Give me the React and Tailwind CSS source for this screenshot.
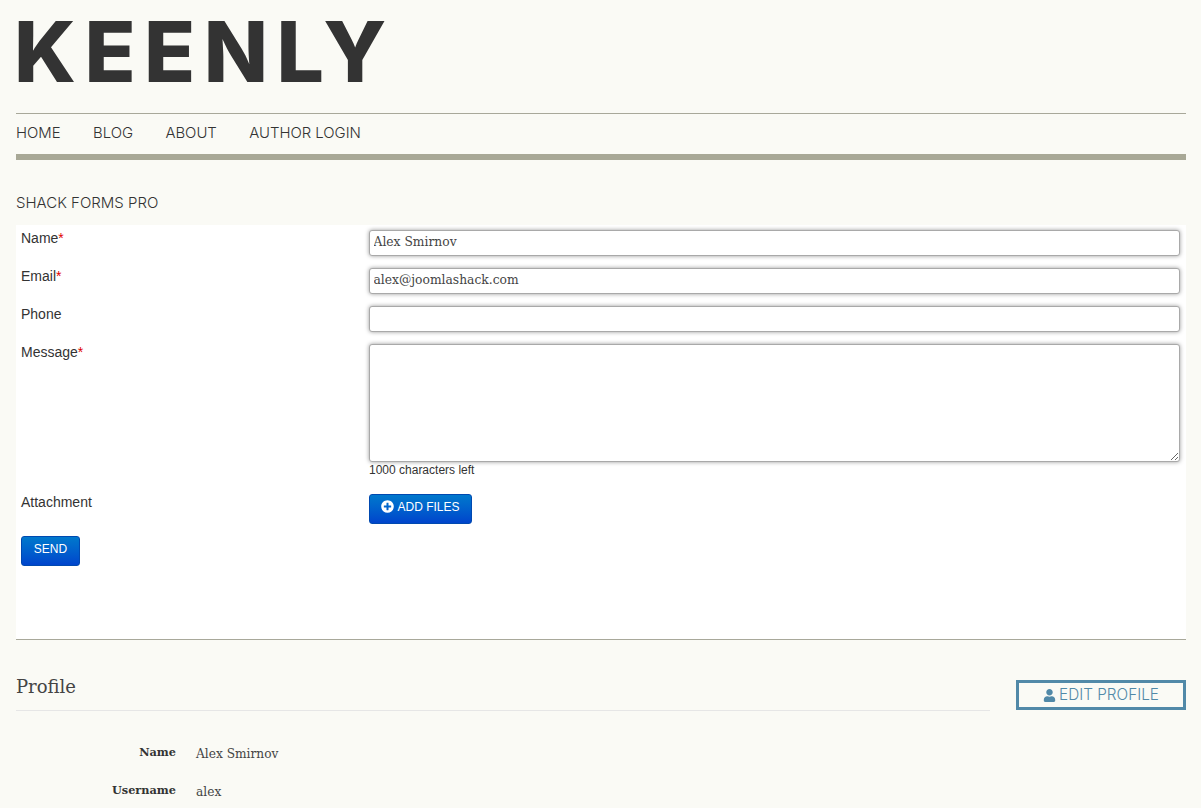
import React from "react";
import { FaUser, FaPlusCircle } from "react-icons/fa";

const mont = "font-['Inter','Lato',sans-serif]";
const slab = "font-['DejaVu_Serif','Liberation_Serif',serif]";
const label = "font-['Liberation_Sans',Arial,sans-serif] text-[14px] leading-[20px] text-[#333] pt-[3px]";
const field = "block w-full rounded-[3px] border border-[#a9a9a9] bg-white px-[3.5px] text-[12.3px] text-[#444] shadow-[0_0_4px_rgba(0,0,0,0.4)] outline-none " + slab;
const btn = "flex items-center justify-center rounded-[3px] border border-[#0049b0] bg-gradient-to-b from-[#0078cc] to-[#0044cc] pb-[5px] font-['Liberation_Sans',Arial,sans-serif] text-[12px] text-white";

function Req() {
  return <span className="text-[#e00000]">*</span>;
}

function Row({ name, req, value }) {
  return (
    <div className="grid h-[38px] grid-cols-[348px_811px]">
      <div className={label}>{name}{req && <Req />}</div>
      <input readOnly value={value} className={field + " mt-[5px] h-[26px] pb-[3px]"} />
    </div>
  );
}

export default function App() {
  return (
    <div className="h-[808px] min-h-[808px] overflow-hidden bg-[#fafaf5] pl-4 pr-[15px]">
      <header className="h-[114px] border-b border-[#a8a89a]">
        <div className={"-ml-[2px] pt-[5px] text-[84px] font-extrabold leading-[94px] tracking-[8.4px] text-[#333] " + mont}>KEENLY</div>
      </header>
      <nav className={"flex h-[46px] items-center gap-[32.4px] border-b-[6px] border-[#a8a896] pb-[1px] text-[14.9px] font-light text-[#333] " + mont}>
        <a>HOME</a>
        <a>BLOG</a>
        <a>ABOUT</a>
        <a>AUTHOR LOGIN</a>
      </nav>
      <h3 className={"flex h-[65px] items-end pb-[11px] text-[15px] font-light text-[#333] " + mont}>SHACK FORMS PRO</h3>
      <section className="h-[415px] border-b border-[#a8a89a] bg-white pl-[5px]">
        <Row name="Name" req value="Alex Smirnov" />
        <Row name="Email" req value="alex@joomlashack.com" />
        <Row name="Phone" value="" />
        <div className="grid h-[150px] grid-cols-[348px_811px]">
          <div className={label}>Message<Req /></div>
          <div className="pt-[5px]">
            <textarea readOnly className={field + " h-[118px]"} />
            <p className="font-['Liberation_Sans',Arial,sans-serif] text-[12px] leading-[16px] text-[#333]">1000 characters left</p>
          </div>
        </div>
        <div className="grid h-[47px] grid-cols-[348px_811px]">
          <div className={label}>Attachment</div>
          <div className="pt-[5px]">
            <button className={btn + " h-[30px] w-[103px] gap-[3px]"}>
              <FaPlusCircle className="text-[13px]" />ADD FILES
            </button>
          </div>
        </div>
        <button className={btn + " h-[30px] w-[59px]"}>SEND</button>
      </section>
      <div className="flex items-start justify-between">
        <div className="mt-[30px] h-[41px] w-[974px] border-b border-[#e6e6e6]">
          <h2 className={"text-[18px] font-normal leading-[34px] text-[#444] " + slab}>Profile</h2>
        </div>
        <button className={"mt-[40px] flex h-[30px] w-[170px] items-center justify-center gap-[3px] border-[3px] border-[#5189a8] text-[15.3px] font-light text-[#5189a8] " + mont}>
          <FaUser className="text-[13px]" />EDIT PROFILE
        </button>
      </div>
      <dl className={"mt-[33px] text-[12.2px] text-[#444] " + slab}>
        <div className="flex h-[38px] gap-5">
          <dt className="w-[160px] text-right text-[11.3px] font-bold text-[#333]">Name</dt>
          <dd className="pt-[1px]">Alex Smirnov</dd>
        </div>
        <div className="flex h-[38px] gap-5">
          <dt className="w-[160px] text-right text-[11.3px] font-bold text-[#333]">Username</dt>
          <dd className="pt-[1px]">alex</dd>
        </div>
      </dl>
    </div>
  );
}
